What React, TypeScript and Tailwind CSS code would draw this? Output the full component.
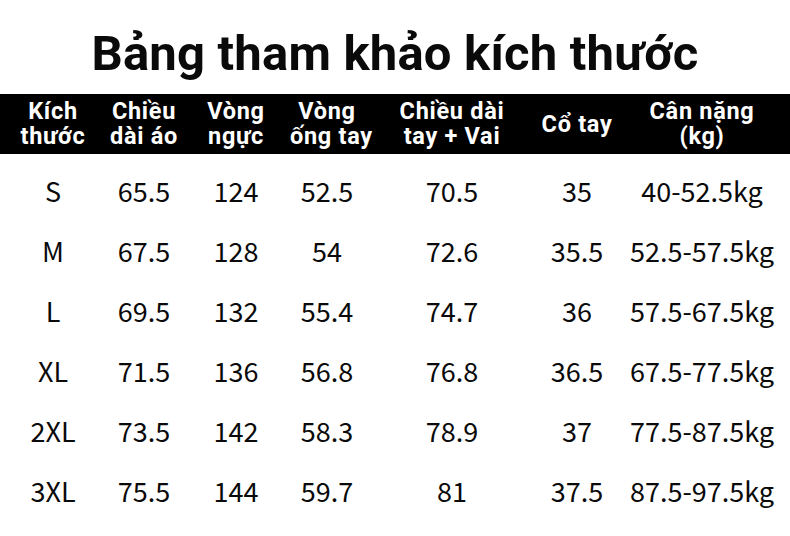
const columns = [
	["Kích", "thước"],
	["Chiều", "dài áo"],
	["Vòng", "ngực"],
	["Vòng", "ống tay"],
	["Chiều dài", "tay + Vai"],
	["Cổ tay"],
	["Cân nặng", "(kg)"],
];

const rows = [
	["S", "65.5", "124", "52.5", "70.5", "35", "40-52.5kg"],
	["M", "67.5", "128", "54", "72.6", "35.5", "52.5-57.5kg"],
	["L", "69.5", "132", "55.4", "74.7", "36", "57.5-67.5kg"],
	["XL", "71.5", "136", "56.8", "76.8", "36.5", "67.5-77.5kg"],
	["2XL", "73.5", "142", "58.3", "78.9", "37", "77.5-87.5kg"],
	["3XL", "75.5", "144", "59.7", "81", "37.5", "87.5-97.5kg"],
];

const grid =
	"grid grid-cols-[106px_76px_108px_74px_176px_74px_176px] text-center";

export default function App() {
	return (
		<div className="h-[536px] w-[790px] overflow-hidden bg-white text-[#0a0a0a]">
			<h1 className="pt-[29px] text-center font-['Roboto',sans-serif] text-[49px] font-bold leading-[49px] tracking-[0.2px]">
				Bảng tham khảo kích thước
			</h1>
			<div
				className={`${grid} mt-[16px] h-[60px] items-center bg-black font-['Roboto',sans-serif] text-[23.5px] font-bold leading-[25px] tracking-[0.7px] text-white`}
			>
				{columns.map((lines) => (
					<div key={lines.join(" ")} className="whitespace-nowrap">
						{lines.map((line) => (
							<div key={line}>{line}</div>
						))}
					</div>
				))}
			</div>
			<div className="mt-[7px] font-['Noto_Sans_CJK_SC','Noto_Sans',sans-serif] text-[27px] leading-[60px]">
				{rows.map((row) => (
					<div key={row[0]} className={grid}>
						{row.map((cell, i) => (
							<div key={`${row[0]}-${i}`} className="whitespace-nowrap">
								{cell}
							</div>
						))}
					</div>
				))}
			</div>
		</div>
	);
}
